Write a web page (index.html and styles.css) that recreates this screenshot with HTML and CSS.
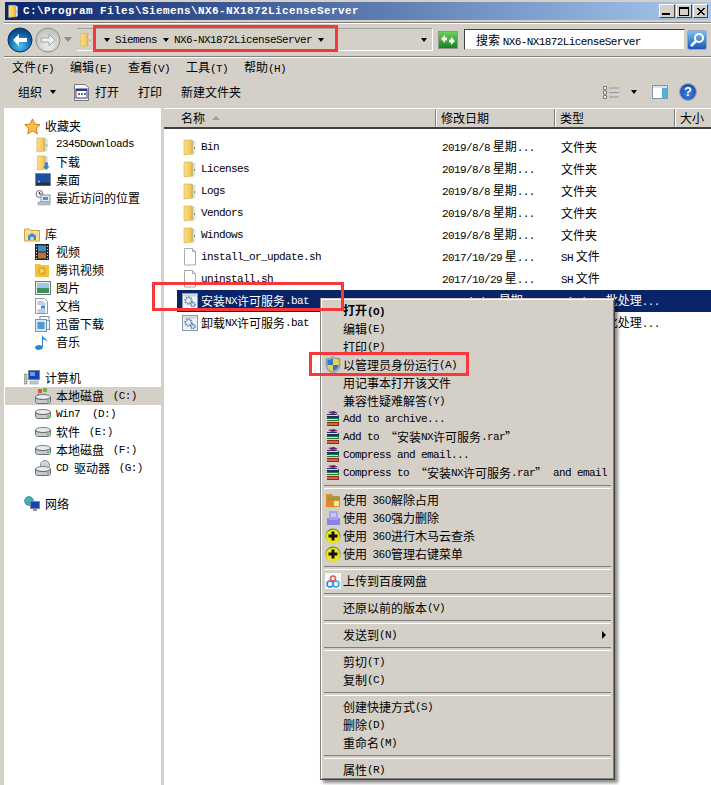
FILE: index.html
```html
<!DOCTYPE html>
<html lang="zh-CN">
<head>
  <meta charset="UTF-8">
  <title>NX6-NX1872LicenseServer</title>
  <link rel="stylesheet" href="styles.css">
</head>
<body>
<svg class="defs" xmlns="http://www.w3.org/2000/svg">
  <defs>
    <linearGradient id="gFolder" x1="0" y1="0" x2="1" y2="0"><stop offset="0" stop-color="#f9e08c"/><stop offset=".65" stop-color="#f3cb5c"/><stop offset="1" stop-color="#d9a93c"/></linearGradient>
    <radialGradient id="gBack" cx=".5" cy=".75" r=".8"><stop offset="0" stop-color="#49c6f2"/><stop offset=".6" stop-color="#0f62a8"/><stop offset="1" stop-color="#0a3668"/></radialGradient>
    <radialGradient id="gFwd" cx=".5" cy=".7" r=".8"><stop offset="0" stop-color="#eef0ee"/><stop offset="1" stop-color="#b4b6b4"/></radialGradient>
    <linearGradient id="gGreen" x1="0" y1="0" x2="0" y2="1"><stop offset="0" stop-color="#6fd15c"/><stop offset="1" stop-color="#157f24"/></linearGradient>
    <linearGradient id="gBlue" x1="0" y1="0" x2="0" y2="1"><stop offset="0" stop-color="#7fc0f2"/><stop offset="1" stop-color="#1456b8"/></linearGradient>
    <symbol id="i-folder" viewBox="0 0 16 18"><path d="M2 2h7l2 1v13l-9 1z" fill="url(#gFolder)" stroke="#d5ac4c" stroke-width=".6"/><path d="M9 2l4 1.5v11.5l-2 1.5V3z" fill="#e6eef0" stroke="#b9c4c4" stroke-width=".5"/><rect x="12" y="9" width="1" height="2" fill="#3f8fd0"/></symbol>
    <symbol id="i-file" viewBox="0 0 16 18"><path d="M2.5 .5h8l3 3v13.5h-11z" fill="#fff" stroke="#a9a9a9"/><path d="M10.5 .5v3h3" fill="#e8e8e8" stroke="#a9a9a9"/></symbol>
    <symbol id="i-bat" viewBox="0 0 16 16"><rect x=".5" y=".5" width="15" height="15" fill="#eef2f6" stroke="#8b98a8"/><rect x="1.5" y="1.5" width="13" height="2" fill="#c8d2de"/><circle cx="6.5" cy="7.5" r="3.2" fill="none" stroke="#6c87a8" stroke-width="2" stroke-dasharray="1.6 .8"/><circle cx="11" cy="11.5" r="2" fill="none" stroke="#3f78b8" stroke-width="1.5" stroke-dasharray="1.2 .6"/></symbol>
    <symbol id="i-star" viewBox="0 0 18 18"><path d="M9 1l2.4 5.4 5.8.6-4.4 3.9 1.3 5.8L9 13.7l-5.1 3 1.3-5.8L.8 7l5.8-.6z" fill="#fbc23f" stroke="#d9701c"/></symbol>
    <symbol id="i-dl" viewBox="0 0 16 18"><use href="#i-folder" width="16" height="18"/><path d="M10 9h3v4h2l-3.500 4L8 13h2z" fill="#2a82d0"/></symbol>
    <symbol id="i-desk" viewBox="0 0 16 14"><rect x=".5" y=".5" width="15" height="12" fill="#1c4f9e" stroke="#7c8ea4"/><rect x="1" y="9.500" width="14" height="3" fill="#26303a"/><rect x="3" y="7.500" width="2" height="2" fill="#6fb0e6"/></symbol>
    <symbol id="i-recent" viewBox="0 0 16 16"><circle cx="4.500" cy="4" r="3.500" fill="#eee" stroke="#777"/><path d="M4.500 2v2h2" fill="none" stroke="#333"/><rect x="6" y="5" width="9" height="7" fill="#dfe8f0" stroke="#8594a4"/><rect x="8" y="7" width="5" height="3" fill="#4a94d0"/><rect x="3" y="12" width="12" height="3" fill="#bcc2c8" stroke="#858c94" stroke-width=".5"/></symbol>
    <symbol id="i-lib" viewBox="0 0 16 16"><path d="M.5 3h5l1 1.500h9V15H.5z" fill="#f6dd92" stroke="#c9a44c"/><path d="M4 14V9.500l4-2.500 4 2.500V14h-2.500v-3h-3v3z" fill="#3f8fd0"/></symbol>
    <symbol id="i-film" viewBox="0 0 14 16"><rect width="14" height="16" fill="#1c2a30"/><rect x="3" y="1.500" width="8" height="6" fill="#3d8dc4"/><rect x="3" y="8.500" width="8" height="6" fill="#c46f3a"/><path d="M1 2h1v1H1zm0 3h1v1H1zm0 3h1v1H1zm0 3h1v1H1zm0 3h1v1H1zm11-12h1v1h-1zm0 3h1v1h-1zm0 3h1v1h-1zm0 3h1v1h-1zm0 3h1v1h-1z" fill="#ddd"/></symbol>
    <symbol id="i-tx" viewBox="0 0 14 14"><path d="M0 1h5l1 1h8v12H0z" fill="#f2c23c"/><circle cx="7" cy="8" r="4" fill="#e4a92c"/><path d="M5.500 5.500l4 2.500-4 2.500z" fill="#f7dd84"/></symbol>
    <symbol id="i-pic" viewBox="0 0 16 14"><rect x=".5" y=".5" width="15" height="13" fill="#eee" stroke="#777"/><rect x="2" y="2" width="12" height="5" fill="#9cc6ea"/><rect x="2" y="7" width="12" height="5" fill="#3f8f5a"/></symbol>
    <symbol id="i-doc" viewBox="0 0 13 16"><path d="M.5 .5h9l3 3v12H.5z" fill="#fbfbfb" stroke="#8a98a8"/><path d="M2.500 4h6M2.500 6h8M2.500 12h8M2.500 14h8" stroke="#7f9fc4"/><rect x="6" y="7.500" width="4" height="3" fill="#3f8fd0"/></symbol>
    <symbol id="i-xl" viewBox="0 0 16 16"><rect x="5" y=".5" width="9" height="4" fill="#fff" stroke="#7d92ae"/><rect x=".5" y="3.500" width="11" height="12" fill="#dbe8f4" stroke="#7d92ae"/><rect x="2.500" y="6" width="7" height="7" fill="#4d9ad8"/><rect x="11.500" y="4.500" width="3" height="9" fill="#eef4fa" stroke="#7d92ae"/></symbol>
    <symbol id="i-music" viewBox="0 0 14 16"><path d="M7 1c1 3 5 3 5 7-1-2-3-2.500-4-2.500V13c0 2-2.500 3-4.500 3S0 15 0 13.500 2 11 4 11c1 0 2 .2 3 .8z" fill="#2d86d4"/></symbol>
    <symbol id="i-pc" viewBox="0 0 16 16"><rect x="0" y="4" width="3" height="10" fill="#b9c0c8" stroke="#666" stroke-width=".5"/><rect x="4.500" y=".5" width="11" height="9" fill="#1740b4" stroke="#7c8694"/><rect x="6" y="2" width="5" height="4" fill="#5d9fe6"/><rect x="6" y="11" width="8" height="3" fill="#c8ccd2" stroke="#7c8694" stroke-width=".5"/></symbol>
    <symbol id="i-disk" viewBox="0 0 16 10"><ellipse cx="8" cy="3" rx="7.500" ry="2.500" fill="#e8ecee" stroke="#7a8084"/><path d="M.5 3v4.500c0 1 1 2 2 2h11c1 0 2-1 2-2V3c0 1.500-2 2.500-7.500 2.500S.5 4.500.5 3z" fill="#c3cace" stroke="#6a7074"/><rect x="12" y="6.500" width="2" height="1.500" fill="#3fc04a"/></symbol>
    <symbol id="i-sys" viewBox="0 0 16 16"><rect x="3" y="1" width="4" height="4" fill="#e4572e"/><rect x="8" y="0" width="4" height="4" fill="#6fb53a"/><rect x="2" y="6" width="4" height="4" fill="#2f7fd0"/><rect x="7" y="5" width="4" height="4" fill="#f4c22e"/><use href="#i-disk" y="6" width="16" height="10"/></symbol>
    <symbol id="i-cd" viewBox="0 0 16 16"><circle cx="10" cy="5" r="4.500" fill="#d4d8e0" stroke="#888"/><circle cx="10" cy="5" r="1.200" fill="#fff" stroke="#888" stroke-width=".5"/><use href="#i-disk" y="6" width="16" height="10"/></symbol>
    <symbol id="i-net" viewBox="0 0 16 16"><circle cx="5" cy="5" r="4.500" fill="#3fa6d8" stroke="#1f6ea0" stroke-width=".5"/><path d="M2 3l3-1 1 2-3 2z" fill="#5cc04a"/><rect x="6.500" y="5.500" width="9" height="7" fill="#1740b4" stroke="#7c8694"/><rect x="9" y="13" width="4" height="2" fill="#8f98a4"/></symbol>
    <symbol id="i-shield" viewBox="0 0 16 18"><path d="M8 .5c2 1.500 4 2 7 2.200v6.300c0 4-3 7-7 8.500-4-1.500-7-4.500-7-8.500V2.700C4 2.500 6 2 8 .500z" fill="#a8b0b8" stroke="#7a828a" stroke-width=".6"/><path d="M8 2.500V9H2.500V3.800C5 3.700 6.500 3.300 8 2.500z" fill="#2f78d0"/><path d="M8 2.500c1.500.8 3 1.200 5.500 1.300V9H8z" fill="#f6cf3a"/><path d="M2.500 9H8v6.200C5 14 2.500 12 2.500 9z" fill="#f6cf3a"/><path d="M8 9h5.500c0 3-2.500 5-5.500 6.200z" fill="#2f78d0"/></symbol>
    <symbol id="i-rar" viewBox="0 0 16 16"><path d="M3 1l6-1 4 2-6 1z" fill="#7a1f5a"/><path d="M2 3l9 0 3 1.500v2.500H2z" fill="#1d2f6e"/><rect x="2" y="4" width="11" height="1" fill="#d9d9d9"/><path d="M2 7h12v3H2z" fill="#1f7f3a"/><rect x="2" y="8" width="11" height="1" fill="#d9d9d9"/><path d="M2 11h12v4H2z" fill="#a11f2a"/><rect x="2" y="12.500" width="11" height="1" fill="#e4c23c"/></symbol>
    <symbol id="i-unlock" viewBox="0 0 16 16"><path d="M1 2h6l1 2h7v11H1z" fill="#e08a2c"/><path d="M2 5h13v3H2z" fill="#6fae4a"/><rect x="9" y="9" width="5" height="5" fill="#f9e6a0"/></symbol>
    <symbol id="i-del" viewBox="0 0 16 16"><rect x="2" y="8" width="13" height="7" rx="1" fill="#8a82e0"/><rect x="4" y="1" width="9" height="9" rx="1" fill="#a8a2ec"/><path d="M6 4h5M6 6h5" stroke="#e8e6fa"/></symbol>
    <symbol id="i-360" viewBox="0 0 16 16"><circle cx="8" cy="8" r="7.500" fill="#2f8f2a"/><path d="M1 9a7 7 0 0 1 13-4l1 4a7 7 0 0 1-14 0z" fill="#f2e21c"/><path d="M6.500 3.500h3v3h3v3h-3v3h-3v-3h-3v-3h3z" fill="#111"/></symbol>
    <symbol id="i-baidu" viewBox="0 0 16 16"><rect width="16" height="16" fill="#f4f8fc"/><circle cx="5" cy="11" r="3" fill="none" stroke="#2f86e0" stroke-width="1.600"/><circle cx="11" cy="11" r="3" fill="none" stroke="#2fa8e0" stroke-width="1.600"/><circle cx="8" cy="5.500" r="2.500" fill="none" stroke="#e85a5a" stroke-width="1.600"/></symbol>
  </defs>
</svg>

<div class="window">
  <div class="titlebar">
    <svg class="title-icon" width="13" height="16"><use href="#i-folder" width="13" height="16"/></svg>
    <span class="title-text">C:\Program Files\Siemens\NX6-NX1872LicenseServer</span>
    <div class="winbtns">
      <span class="winbtn"><i class="g-min"></i></span>
      <span class="winbtn"><i class="g-max"></i></span>
      <span class="winbtn close">
        <svg width="10" height="9"><path d="M1 1l7 7M2 1l7 7M8 1L1 8M9 1L2 8" stroke="#000"/></svg>
      </span>
    </div>
  </div>

  <div class="addressbar">
    <svg class="nav-btn" width="26" height="26" viewBox="0 0 26 26"><circle cx="13" cy="13" r="12" fill="url(#gBack)" stroke="#0a2f58"/><path d="M6 13l6-6v4h8v4h-8v4z" fill="#fff"/></svg>
    <svg class="nav-btn" width="26" height="26" viewBox="0 0 26 26"><circle cx="13" cy="13" r="12" fill="url(#gFwd)" stroke="#8a8c8a"/><path d="M20 13l-6-6v4H6v4h8v4z" fill="#f4f4f4" stroke="#a0a2a0"/></svg>
    <span class="tri-gray"></span>
    <div class="addr-box">
      <svg class="addr-folder" width="14" height="19"><use href="#i-folder" width="14" height="19"/></svg>
      <span class="tri crumb-first"></span>
      <span class="la crumb">Siemens</span>
      <span class="tri"></span>
      <span class="la crumb">NX6-NX1872LicenseServer</span>
      <span class="tri"></span>
      <span class="tri addr-drop"></span>
    </div>
    <svg class="refresh" width="20" height="18" viewBox="0 0 20 18"><rect x=".5" y=".5" width="19" height="17" fill="url(#gGreen)" stroke="#8a9a88"/><path d="M3 8l4-4v2.500h2v3H7V12zM17 10l-4 4v-2.500h-2v-3h2V6z" fill="#fff"/></svg>
    <div class="search-box">搜索 <span class="la">NX6-NX1872LicenseServer</span></div>
    <svg class="search-btn" width="20" height="20" viewBox="0 0 20 20"><rect x=".5" y=".5" width="19" height="19" rx="2" fill="url(#gBlue)" stroke="#9ab"/><circle cx="12" cy="8" r="4" fill="none" stroke="#fff" stroke-width="2"/><path d="M9 11l-5 5" stroke="#fff" stroke-width="2.500"/></svg>
  </div>

  <div class="menubar">
    <span class="menu-item">文件<span class="la">(F)</span></span>
    <span class="menu-item">编辑<span class="la">(E)</span></span>
    <span class="menu-item">查看<span class="la">(V)</span></span>
    <span class="menu-item">工具<span class="la">(T)</span></span>
    <span class="menu-item">帮助<span class="la">(H)</span></span>
  </div>

  <div class="toolbar">
    <span class="tool tool-org">组织<span class="tri"></span></span>
    <span class="tool tool-open">
      <svg width="15" height="17" viewBox="0 0 15 17"><path d="M.5 .5h11l3 3v13H.5z" fill="#f4f4f4" stroke="#777"/><rect x="2" y="5" width="11" height="9" fill="#fff" stroke="#2c3e80"/><rect x="2" y="5" width="11" height="2" fill="#2c3e80"/><path d="M4 9h2v2H4z" fill="#d04a3a"/><path d="M7 9h2v2H7z" fill="#4a9a3a"/><path d="M10 9h2v2h-2z" fill="#3a6ad0"/></svg>
      打开
    </span>
    <span class="tool tool-print">打印</span>
    <span class="tool">新建文件夹</span>
    <div class="tool-right">
      <svg width="16" height="13" viewBox="0 0 16 13"><path d="M.5 .5h3v3h-3zM.5 5h3v3h-3zM.5 9.500h3v3h-3z" fill="#fff" stroke="#777"/><path d="M6 2h10M6 6.500h10M6 11h10" stroke="#8a96a4"/></svg>
      <span class="tri view-tri"></span>
      <svg class="pane-icon" width="16" height="14" viewBox="0 0 16 14"><rect x=".5" y=".5" width="15" height="13" fill="#fff" stroke="#7c96b0"/><rect x="10" y="1" width="5" height="12" fill="#57b0da"/><rect x="1" y="1" width="14" height="2" fill="#d8e6f2"/></svg>
      <span class="help">?</span>
    </div>
  </div>

  <div class="main">
    <div class="nav">
      <div class="nav-row group"><svg width="17" height="17"><use href="#i-star" width="17" height="17"/></svg>收藏夹</div>
      <div class="nav-row"><svg width="15" height="17"><use href="#i-folder" width="15" height="17"/></svg><span class="la">2345Downloads</span></div>
      <div class="nav-row"><svg width="16" height="17"><use href="#i-dl" width="16" height="17"/></svg>下载</div>
      <div class="nav-row"><svg width="16" height="14"><use href="#i-desk" width="16" height="14"/></svg>桌面</div>
      <div class="nav-row"><svg width="16" height="16"><use href="#i-recent" width="16" height="16"/></svg>最近访问的位置</div>
      <div class="nav-row"></div>
      <div class="nav-row group"><svg width="16" height="16"><use href="#i-lib" width="16" height="16"/></svg>库</div>
      <div class="nav-row"><svg width="14" height="16"><use href="#i-film" width="14" height="16"/></svg>视频</div>
      <div class="nav-row"><svg width="14" height="14"><use href="#i-tx" width="14" height="14"/></svg>腾讯视频</div>
      <div class="nav-row"><svg width="16" height="14"><use href="#i-pic" width="16" height="14"/></svg>图片</div>
      <div class="nav-row"><svg width="13" height="16"><use href="#i-doc" width="13" height="16"/></svg>文档</div>
      <div class="nav-row"><svg width="16" height="16"><use href="#i-xl" width="16" height="16"/></svg>迅雷下载</div>
      <div class="nav-row"><svg width="14" height="16"><use href="#i-music" width="14" height="16"/></svg>音乐</div>
      <div class="nav-row"></div>
      <div class="nav-row group"><svg width="16" height="16"><use href="#i-pc" width="16" height="16"/></svg>计算机</div>
      <div class="nav-row current"><svg width="16" height="16"><use href="#i-sys" width="16" height="16"/></svg>本地磁盘 <span class="la">&nbsp;(C:)</span></div>
      <div class="nav-row"><svg width="16" height="10"><use href="#i-disk" width="16" height="10"/></svg><span class="la">Win7</span><span class="la">&nbsp;&nbsp;(D:)</span></div>
      <div class="nav-row"><svg width="16" height="10"><use href="#i-disk" width="16" height="10"/></svg>软件 <span class="la">&nbsp;(E:)</span></div>
      <div class="nav-row"><svg width="16" height="10"><use href="#i-disk" width="16" height="10"/></svg>本地磁盘 <span class="la">&nbsp;(F:)</span></div>
      <div class="nav-row"><svg width="16" height="16"><use href="#i-cd" width="16" height="16"/></svg><span class="la">CD&nbsp;</span>驱动器 <span class="la">&nbsp;(G:)</span></div>
      <div class="nav-row"></div>
      <div class="nav-row group"><svg width="16" height="16"><use href="#i-net" width="16" height="16"/></svg>网络</div>
    </div>

    <div class="list">
      <div class="list-head">
        <div class="col col-name">名称<span class="sort-tri"></span></div>
        <div class="col col-date">修改日期</div>
        <div class="col col-type">类型</div>
        <div class="col col-size">大小</div>
      </div>
      <div class="rows">
        <div class="row"><div class="cell-name"><svg width="16" height="18"><use href="#i-folder" width="16" height="18"/></svg><span class="la">Bin</span></div><div class="cell"><span class="la">2019/8/8</span> 星期<span class="la">...</span></div><div class="cell">文件夹</div></div>
        <div class="row"><div class="cell-name"><svg width="16" height="18"><use href="#i-folder" width="16" height="18"/></svg><span class="la">Licenses</span></div><div class="cell"><span class="la">2019/8/8</span> 星期<span class="la">...</span></div><div class="cell">文件夹</div></div>
        <div class="row"><div class="cell-name"><svg width="16" height="18"><use href="#i-folder" width="16" height="18"/></svg><span class="la">Logs</span></div><div class="cell"><span class="la">2019/8/8</span> 星期<span class="la">...</span></div><div class="cell">文件夹</div></div>
        <div class="row"><div class="cell-name"><svg width="16" height="18"><use href="#i-folder" width="16" height="18"/></svg><span class="la">Vendors</span></div><div class="cell"><span class="la">2019/8/8</span> 星期<span class="la">...</span></div><div class="cell">文件夹</div></div>
        <div class="row"><div class="cell-name"><svg width="16" height="18"><use href="#i-folder" width="16" height="18"/></svg><span class="la">Windows</span></div><div class="cell"><span class="la">2019/8/8</span> 星期<span class="la">...</span></div><div class="cell">文件夹</div></div>
        <div class="row"><div class="cell-name"><svg width="16" height="18"><use href="#i-file" width="16" height="18"/></svg><span class="la">install_or_update.sh</span></div><div class="cell"><span class="la">2017/10/29</span> 星<span class="la">...</span></div><div class="cell"><span class="la">SH</span> 文件</div></div>
        <div class="row"><div class="cell-name"><svg width="16" height="18"><use href="#i-file" width="16" height="18"/></svg><span class="la">uninstall.sh</span></div><div class="cell"><span class="la">2017/10/29</span> 星<span class="la">...</span></div><div class="cell"><span class="la">SH</span> 文件</div></div>
        <div class="row selected"><div class="cell-name"><svg width="16" height="16"><use href="#i-bat" width="16" height="16"/></svg>安装<span class="la">NX</span>许可服务<span class="la">.bat</span></div><div class="cell"><span class="la">2019/6/06</span> 星期<span class="la">...</span></div><div class="cell"><span class="la">Windows</span> 批处理<span class="la">...</span></div></div>
        <div class="row"><div class="cell-name"><svg width="16" height="16"><use href="#i-bat" width="16" height="16"/></svg>卸载<span class="la">NX</span>许可服务<span class="la">.bat</span></div><div class="cell"><span class="la">2019/6/06</span> 星期<span class="la">...</span></div><div class="cell"><span class="la">Windows</span> 批处理<span class="la">...</span></div></div>
      </div>
    </div>
  </div>
</div>

<div class="context-menu">
  <div class="cm-item"><span class="cm-icon"></span><b>打开<span class="la">(O)</span></b></div>
  <div class="cm-item"><span class="cm-icon"></span>编辑<span class="la">(E)</span></div>
  <div class="cm-item"><span class="cm-icon"></span>打印<span class="la">(P)</span></div>
  <div class="cm-item"><span class="cm-icon"><svg width="16" height="18"><use href="#i-shield" width="16" height="18"/></svg></span>以管理员身份运行<span class="la">(A)</span></div>
  <div class="cm-item"><span class="cm-icon"></span>用记事本打开该文件</div>
  <div class="cm-item"><span class="cm-icon"></span>兼容性疑难解答<span class="la">(Y)</span></div>
  <div class="cm-item"><span class="cm-icon"><svg width="16" height="16"><use href="#i-rar" width="16" height="16"/></svg></span><span class="la">Add to archive...</span></div>
  <div class="cm-item"><span class="cm-icon"><svg width="16" height="16"><use href="#i-rar" width="16" height="16"/></svg></span><span class="la">Add to </span>“安装<span class="la">NX</span>许可服务<span class="la">.rar</span>”</div>
  <div class="cm-item"><span class="cm-icon"><svg width="16" height="16"><use href="#i-rar" width="16" height="16"/></svg></span><span class="la">Compress and email...</span></div>
  <div class="cm-item"><span class="cm-icon"><svg width="16" height="16"><use href="#i-rar" width="16" height="16"/></svg></span><span class="la">Compress to </span>“安装<span class="la">NX</span>许可服务<span class="la">.rar</span>”<span class="la"> and email</span></div>
  <div class="cm-sep"></div>
  <div class="cm-item"><span class="cm-icon"><svg width="16" height="16"><use href="#i-unlock" width="16" height="16"/></svg></span>使用 <span class="num">360</span>解除占用</div>
  <div class="cm-item"><span class="cm-icon"><svg width="16" height="16"><use href="#i-del" width="16" height="16"/></svg></span>使用 <span class="num">360</span>强力删除</div>
  <div class="cm-item"><span class="cm-icon"><svg width="16" height="16"><use href="#i-360" width="16" height="16"/></svg></span>使用 <span class="num">360</span>进行木马云查杀</div>
  <div class="cm-item"><span class="cm-icon"><svg width="16" height="16"><use href="#i-360" width="16" height="16"/></svg></span>使用 <span class="num">360</span>管理右键菜单</div>
  <div class="cm-sep"></div>
  <div class="cm-item"><span class="cm-icon"><svg width="16" height="16"><use href="#i-baidu" width="16" height="16"/></svg></span>上传到百度网盘</div>
  <div class="cm-sep"></div>
  <div class="cm-item"><span class="cm-icon"></span>还原以前的版本<span class="la">(V)</span></div>
  <div class="cm-sep"></div>
  <div class="cm-item"><span class="cm-icon"></span>发送到<span class="la">(N)</span><span class="cm-arrow"></span></div>
  <div class="cm-sep"></div>
  <div class="cm-item"><span class="cm-icon"></span>剪切<span class="la">(T)</span></div>
  <div class="cm-item"><span class="cm-icon"></span>复制<span class="la">(C)</span></div>
  <div class="cm-sep"></div>
  <div class="cm-item"><span class="cm-icon"></span>创建快捷方式<span class="la">(S)</span></div>
  <div class="cm-item"><span class="cm-icon"></span>删除<span class="la">(D)</span></div>
  <div class="cm-item"><span class="cm-icon"></span>重命名<span class="la">(M)</span></div>
  <div class="cm-sep"></div>
  <div class="cm-item"><span class="cm-icon"></span>属性<span class="la">(R)</span></div>
</div>

<!-- red marks drawn over the screenshot -->
<div class="mark mark-path"></div>
<div class="mark mark-file"></div>
<div class="mark mark-admin"></div>
</body>
</html>
```

FILE: styles.css
```css
* {
  box-sizing: border-box;
}

html, body {
  margin: 0;
  height: 100%;
  overflow: hidden;
}

body {
  background-color: #d4d0c8;
  color: #000;
  font-family: "Noto Sans CJK SC", "Liberation Sans", sans-serif;
  font-size: 12px;
  line-height: 18px;
}

svg {
  flex: none;
  display: block;
}

.defs {
  width: 0;
  height: 0;
}

.la {
  font-family: "Liberation Mono", "Noto Sans CJK SC", monospace;
  font-size: 11px;
  letter-spacing: -0.6px;
  white-space: pre;
}

.num {
  font-family: "Liberation Sans", sans-serif;
  font-size: 11px;
  margin-left: 3px;
}

.window {
  height: 785px;
  padding-top: 2px;
  display: flex;
  flex-direction: column;
}

/* title bar */
.titlebar {
  height: 18px;
  margin-left: 5px;
  padding-left: 2px;
  display: flex;
  align-items: center;
  background: linear-gradient(to right, #0a246a, #a6caf0);
}

.title-text {
  margin-left: 3px;
  color: #fff;
  font-family: "Liberation Mono", monospace;
  font-size: 11px;
  font-weight: bold;
  letter-spacing: 0.4px;
  white-space: pre;
}

.winbtns {
  margin-left: auto;
  margin-right: 3px;
  display: flex;
  gap: 1px;
}

.winbtn {
  width: 16px;
  height: 14px;
  background-color: #d4d0c8;
  border: 1px solid;
  border-color: #fff #404040 #404040 #fff;
  display: flex;
  align-items: center;
  justify-content: center;
  position: relative;
}

.winbtn.close {
  width: 15px;
}

.g-min {
  width: 8px;
  height: 2px;
  background-color: #000;
  margin-top: 6px;
  margin-right: 2px;
}

.g-max {
  width: 10px;
  height: 9px;
  border: 1px solid #000;
  border-top-width: 2px;
}

/* address row */
.addressbar {
  height: 35px;
  margin: 2px 0 0 4px;
  padding-left: 3px;
  display: flex;
  align-items: center;
  border-top: 1px solid #808080;
  border-bottom: 1px solid #808080;
  box-shadow: inset 0 1px 0 #fff, 0 1px 0 #fff;
}

.nav-btn + .nav-btn {
  margin-left: 2px;
  opacity: .95;
}

.tri-gray {
  margin-left: 3px;
  width: 0;
  height: 0;
  border-left: 4px solid transparent;
  border-right: 4px solid transparent;
  border-top: 5px solid #8c8c8c;
}

.addr-box {
  width: 356px;
  height: 23px;
  margin-left: 5px;
  padding-left: 2px;
  display: flex;
  align-items: center;
  border-top: 1px solid #a5a29b;
  border-bottom: 1px solid #fff;
  border-right: 1px solid #fff;
}

.tri {
  display: inline-block;
  width: 0;
  height: 0;
  border-left: 3.5px solid transparent;
  border-right: 3.5px solid transparent;
  border-top: 4px solid #000;
}

.crumb-first {
  margin-left: 11px;
}

.crumb {
  margin: 0 6px 0 5px;
}

.addr-drop {
  margin-left: auto;
  margin-right: 5px;
}

.refresh {
  margin-left: 5px;
}

.search-box {
  width: 221px;
  height: 21px;
  margin-left: 6px;
  padding-left: 11px;
  background-color: #fff;
  border: 1px solid;
  border-color: #404040 #d4d0c8 #d4d0c8 #404040;
  line-height: 19px;
  white-space: pre;
}

.search-btn {
  margin-left: 2px;
}

/* menu and tool rows */
.menubar {
  height: 20px;
  margin-top: 1px;
  padding-left: 12px;
  display: flex;
  align-items: center;
}

.menu-item {
  width: 58px;
  white-space: pre;
}

.toolbar {
  height: 24px;
  margin-top: 2px;
  padding-left: 18px;
  display: flex;
  align-items: center;
}

.tool {
  display: flex;
  align-items: center;
  margin-right: 19px;
}

.tool-org {
  margin-right: 18px;
}

.tool-org .tri {
  margin-left: 8px;
}

.tool-open svg {
  margin-right: 6px;
}

.tool-right {
  margin-left: auto;
  margin-right: 15px;
  display: flex;
  align-items: center;
}

.view-tri {
  margin-left: 12px;
}

.pane-icon {
  margin-left: 15px;
}

.help {
  width: 16px;
  height: 16px;
  margin-left: 12px;
  border-radius: 50%;
  background: radial-gradient(circle at 50% 65%, #3f7fe0, #1a3f9a);
  box-shadow: 0 0 0 1px #9aa4b4;
  color: #fff;
  font-family: "Liberation Sans", sans-serif;
  font-size: 13px;
  font-weight: bold;
  line-height: 16px;
  text-align: center;
}

/* panes */
.main {
  flex: 1;
  min-height: 0;
  margin-top: 4px;
  padding-left: 4px;
  display: flex;
  gap: 3px;
}

.nav {
  width: 157px;
  padding-top: 9px;
  background-color: #fff;
}

.nav-row {
  height: 18px;
  padding-left: 31px;
  display: flex;
  align-items: center;
  white-space: pre;
}

.nav-row svg {
  margin-right: 5px;
  width: 16px;
}

.nav-row.group {
  padding-left: 20px;
}

.nav-row.current {
  margin-left: 1px;
  padding-left: 30px;
  background-color: #d4d0c8;
}

.list {
  flex: 1;
  min-width: 0;
  background-color: #fff;
}

.list-head {
  height: 21px;
  display: flex;
  background-color: #d4d0c8;
  border-top: 1px solid #fff;
  border-bottom: 2px solid #404040;
}

.col {
  padding-left: 5px;
  border-right: 1px solid #808080;
  box-shadow: 1px 0 0 #fff;
  display: flex;
  align-items: center;
}

.col-name {
  width: 272px;
  padding-left: 17px;
}

.col-date {
  width: 119px;
}

.col-type {
  width: 120px;
}

.col-size {
  flex: 1;
  border-right: 0;
  box-shadow: none;
}

.sort-tri {
  margin-left: 7px;
  width: 0;
  height: 0;
  border-left: 4px solid transparent;
  border-right: 4px solid transparent;
  border-bottom: 4px solid #a09c94;
}

.rows {
  padding: 7px 0 0 13px;
}

.row {
  height: 22px;
  display: grid;
  grid-template-columns: 259px 119px 120px;
  align-items: center;
  white-space: pre;
}

.row.selected {
  background-color: #0a246a;
  color: #fff;
}

.cell-name {
  padding-left: 5px;
  display: flex;
  align-items: center;
}

.cell-name svg {
  margin-right: 3px;
}

.cell {
  padding-left: 6px;
}

/* right click menu */
.context-menu {
  position: absolute;
  left: 320px;
  top: 298px;
  width: 295px;
  height: 482px;
  padding: 3px 3px 0 1px;
  background-color: #d4d0c8;
  border: 1px solid;
  border-color: #d4d0c8 #404040 #404040 #808080;
  box-shadow: inset 1px 1px 0 #fff, inset -1px -1px 0 #808080, 3px 3px 3px rgba(0, 0, 0, .45);
}

.cm-item {
  height: 18px;
  display: flex;
  align-items: center;
  white-space: pre;
  position: relative;
}

.cm-item b .la {
  font-weight: bold;
}

.cm-icon {
  width: 21px;
  padding-left: 3px;
  flex: none;
}

.cm-sep {
  height: 9px;
  margin: 0 0 0 2px;
  padding-top: 3px;
}

.cm-sep::before {
  content: "";
  display: block;
  height: 2px;
  border-top: 1px solid #808080;
  border-bottom: 1px solid #fff;
}

.cm-arrow {
  position: absolute;
  right: 5px;
  top: 5px;
  width: 0;
  height: 0;
  border-top: 4px solid transparent;
  border-bottom: 4px solid transparent;
  border-left: 4px solid #000;
}

/* red marks */
.mark {
  position: absolute;
  border: 3px solid #f83838;
}

.mark-path {
  left: 93px;
  top: 25px;
  width: 245px;
  height: 27px;
}

.mark-file {
  left: 152px;
  top: 282px;
  width: 192px;
  height: 29px;
}

.mark-admin {
  left: 309px;
  top: 352px;
  width: 160px;
  height: 24px;
}
```
